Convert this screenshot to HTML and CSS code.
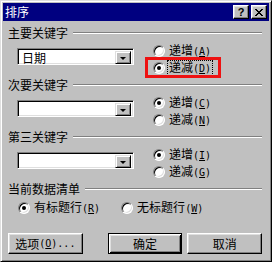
FILE: index.html
```html
<!DOCTYPE html>
<html lang="zh-CN">
<head>
  <meta charset="UTF-8">
  <title>排序</title>
  <link rel="stylesheet" href="styles.css">
</head>
<body>
<div class="dialog">
  <div class="titlebar">
    <span class="title">排序</span>
    <div class="caption">
      <span class="cap-btn cap-help">?</span>
      <span class="cap-btn">
        <svg width="8" height="7" viewBox="0 0 8 7" shape-rendering="crispEdges"><path d="M0 0h2v1H0zM6 0h2v1H6zM1 1h2v1H1zM5 1h2v1H5zM2 2h4v1H2zM3 3h2v1H3zM2 4h4v1H2zM1 5h2v1H1zM5 5h2v1H5zM0 6h2v1H0zM6 6h2v1H6z"/></svg>
      </span>
    </div>
  </div>

  <div class="content">
    <div class="group">
      <div class="group-head"><span>主要关键字</span><i class="rule"></i></div>
      <div class="group-row">
        <div class="combo"><span class="combo-text">日期</span><span class="combo-btn"><i></i></span></div>
        <div class="radios">
          <label class="radio"><span class="dot"></span><span>递增<span class="key">(<u>A</u>)</span></span></label>
          <label class="radio checked marked"><span class="dot"></span><span class="focus">递减<span class="key">(<u>D</u>)</span></span></label>
        </div>
      </div>
    </div>

    <div class="group">
      <div class="group-head"><span>次要关键字</span><i class="rule"></i></div>
      <div class="group-row">
        <div class="combo"><span class="combo-text"></span><span class="combo-btn"><i></i></span></div>
        <div class="radios">
          <label class="radio checked"><span class="dot"></span><span>递增<span class="key">(<u>C</u>)</span></span></label>
          <label class="radio"><span class="dot"></span><span>递减<span class="key">(<u>N</u>)</span></span></label>
        </div>
      </div>
    </div>

    <div class="group">
      <div class="group-head"><span>第三关键字</span><i class="rule"></i></div>
      <div class="group-row">
        <div class="combo"><span class="combo-text"></span><span class="combo-btn"><i></i></span></div>
        <div class="radios">
          <label class="radio checked"><span class="dot"></span><span>递增<span class="key">(<u>I</u>)</span></span></label>
          <label class="radio"><span class="dot"></span><span>递减<span class="key">(<u>G</u>)</span></span></label>
        </div>
      </div>
    </div>

    <div class="group">
      <div class="group-head"><span>当前数据清单</span><i class="rule"></i></div>
      <div class="radios-inline">
        <label class="radio checked"><span class="dot"></span><span>有标题行<span class="key">(<u>R</u>)</span></span></label>
        <label class="radio"><span class="dot"></span><span>无标题行<span class="key">(<u>W</u>)</span></span></label>
      </div>
    </div>

    <div class="buttons">
      <span class="btn">选项<span class="key">(<u>O</u>)...</span></span>
      <span class="btn btn-default">确定</span>
      <span class="btn btn-cancel">取消</span>
    </div>
  </div>
</div>
</body>
</html>
```

FILE: styles.css
```css
* {
  margin: 0;
  padding: 0;
  box-sizing: border-box;
}

body {
  background: #c0c0c0;
  font-family: "Noto Sans CJK SC", sans-serif;
  font-size: 12px;
  line-height: 12px;
  color: #000;
}

.dialog {
  width: 272px;
  height: 262px;
  background: #c0c0c0;
  border: 1px solid;
  border-color: #dfdfdf #000 #000 #dfdfdf;
  box-shadow: inset 1px 1px #fff, inset -1px -1px #808080;
  padding: 2px;
}

.titlebar {
  height: 18px;
  background: #000080;
  display: flex;
  align-items: center;
  justify-content: space-between;
  padding: 0 2px;
}

.title {
  color: #fff;
}

.caption {
  display: flex;
  gap: 2px;
}

.cap-btn {
  width: 16px;
  height: 14px;
  display: flex;
  align-items: center;
  justify-content: center;
  background: #c0c0c0;
  border: 1px solid;
  border-color: #fff #000 #000 #fff;
  box-shadow: inset -1px -1px #808080, inset 1px 1px #dfdfdf;
}

.cap-help {
  font-family: "Liberation Sans", sans-serif;
  font-weight: bold;
  font-size: 11px;
}

.content {
  padding: 0 7px 0 5px;
}

.group {
  margin-top: 4px;
}

.group:first-child {
  margin-top: 6px;
}

.group-head {
  height: 12px;
  display: flex;
  align-items: center;
}

.rule {
  flex: 1;
  height: 2px;
  margin-left: 5px;
  border-top: 1px solid #808080;
  border-bottom: 1px solid #fff;
}

.group-row {
  display: flex;
  margin-top: 4px;
}

.combo {
  width: 117px;
  height: 17px;
  margin: 5px 0 0 9px;
  display: flex;
  padding: 2px;
  background: #fff;
  border: 1px solid;
  border-color: #808080 #fff #fff #808080;
  box-shadow: inset 1px 1px #000, inset -1px -1px #dfdfdf;
}

.combo-text {
  flex: 1;
  padding-left: 2px;
  line-height: 13px;
}

.combo-btn {
  width: 16px;
  height: 13px;
  display: flex;
  align-items: center;
  justify-content: center;
  background: #c0c0c0;
  border: 1px solid;
  border-color: #dfdfdf #000 #000 #dfdfdf;
  box-shadow: inset 1px 1px #fff, inset -1px -1px #808080;
}

.combo-btn i {
  width: 0;
  height: 0;
  margin-top: 1px;
  border-left: 3px solid transparent;
  border-right: 3px solid transparent;
  border-top: 3px solid #000;
}

.radios {
  width: 70px;
  margin-left: 14px;
  display: flex;
  flex-direction: column;
  gap: 2px;
}

.radio {
  height: 15px;
  display: flex;
  align-items: center;
  gap: 4px;
  padding-left: 5px;
  white-space: nowrap;
}

.dot {
  width: 12px;
  height: 12px;
  flex: none;
  position: relative;
  border-radius: 50%;
  background: #fff;
  border: 1px solid;
  border-color: #808080 #fff #fff #808080;
  box-shadow: inset 1px 1px #000, inset -1px -1px #dfdfdf;
}

.checked .dot::after {
  content: "";
  position: absolute;
  left: 3px;
  top: 3px;
  width: 4px;
  height: 4px;
  border-radius: 50%;
  background: #000;
}

.key {
  font-family: "DejaVu Sans Mono", monospace;
  font-size: 10px;
}

.focus {
  margin-left: -2px;
  padding: 0 1px;
  border: 1px dotted #000;
}

.marked {
  outline: 3px solid #ee1111;
}

.radios-inline {
  display: flex;
  gap: 21px;
  margin: 5px 0 0 10px;
}

.radios-inline .radio {
  padding-left: 0;
}

.buttons {
  display: flex;
  margin-top: 18px;
}

.btn {
  width: 75px;
  height: 21px;
  display: flex;
  align-items: center;
  justify-content: center;
  background: #c0c0c0;
  border: 1px solid;
  border-color: #fff #000 #000 #fff;
  box-shadow: inset -1px -1px #808080, inset 1px 1px #dfdfdf;
}

.btn-default {
  margin-left: 25px;
  border-color: #000;
  box-shadow: inset 1px 1px #fff, inset -1px -1px #000, inset 2px 2px #dfdfdf, inset -2px -2px #808080;
}

.btn-cancel {
  margin-left: 5px;
}
```
